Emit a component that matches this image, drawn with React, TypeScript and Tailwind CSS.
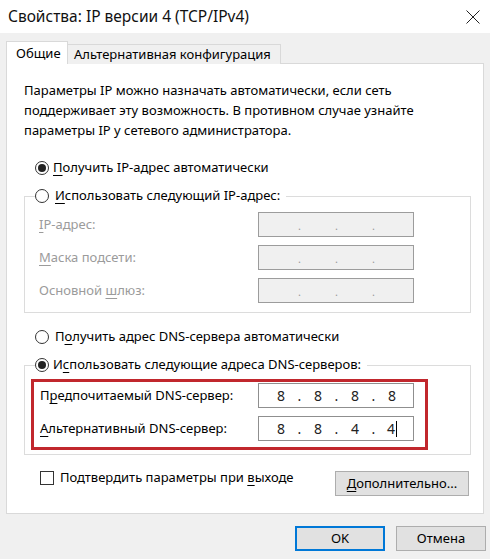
import React from 'react'

const font = { fontFamily: '"Noto Sans", "Open Sans", sans-serif' }

function U({ children }: { children: React.ReactNode }) {
    return <span className="underline underline-offset-[3px] decoration-1">{children}</span>
}

function Radio({ checked }: { checked?: boolean }) {
    return (
        <span className="flex items-center justify-center w-[14px] h-[14px] rounded-full border border-[#333] bg-white shrink-0">
            {checked && <span className="w-[8px] h-[8px] rounded-full bg-[#222]" />}
        </span>
    )
}

function IpBox({ parts, disabled, cursor }: { parts: string[]; disabled?: boolean; cursor?: boolean }) {
    return (
        <div className={`flex items-center h-[25px] w-[156px] pl-[6px] border ${disabled ? 'bg-[#f0f0f0] border-[#9c9c9c]' : 'bg-white border-[#8f8f8f]'}`}>
            {parts.map((p, i) => (
                <React.Fragment key={i}>
                    <span className="w-[32px] text-center text-[14px] text-[#222] flex items-center justify-center">
                        {p}
                        {cursor && i === 3 && <span className="inline-block w-px h-[16px] bg-black ml-px" />}
                    </span>
                    {i < 3 && <span className={`w-[5px] text-center ${disabled ? 'text-[#999] text-[11px] pt-[4px]' : 'text-[#222] text-[14px]'}`}>.</span>}
                </React.Fragment>
            ))}
        </div>
    )
}

export default function App() {
    return (
        <div style={font} className="w-[490px] h-[559px] bg-[#f0f0f0] text-black overflow-hidden">
            <div className="h-[33px] bg-white flex items-center justify-between pl-[8px] pr-[9px]">
                <span className="text-[15.5px] text-[#111]">Свойства: IP версии 4 (TCP/IPv4)</span>
                <svg width="16" height="16" viewBox="0 0 16 16" className="mt-[1px]">
                    <path d="M1.5 1.5 L14.5 14.5 M14.5 1.5 L1.5 14.5" stroke="#222" strokeWidth="1" fill="none" />
                </svg>
            </div>

            <div className="px-[6px]">
                <div className="flex items-end h-[23px] mt-[8px] relative z-10 -mb-px whitespace-nowrap text-[13px]">
                    <div className="h-[23px] w-[62px] bg-white border border-b-0 border-[#d9d9d9] pl-[9px] pt-[2px]">Общие</div>
                    <div className="h-[20px] w-[213px] bg-[#f0f0f0] border border-l-0 border-b-0 border-[#d9d9d9] pl-[6px] leading-[19px]">Альтернативная конфигурация</div>
                </div>

                <div className="h-[451px] bg-white border border-[#d9d9d9] pl-[17px] pr-[12px] text-[13px]">
                    <p className="mt-[16px] leading-[20px] pr-[28px]">
                        Параметры IP можно назначать автоматически, если сеть поддерживает эту возможность. В противном случае узнайте параметры IP у сетевого администратора.
                    </p>

                    <div className="flex items-center gap-[4px] h-[20px] mt-[18px] pl-[11px]">
                        <Radio checked />
                        <span><U>П</U>олучить IP-адрес автоматически</span>
                    </div>

                    <fieldset className="border border-[#dcdcdc] mt-[8px]">
                        <legend className="flex items-center gap-[6px] h-[20px] ml-[10px] pr-[6px]">
                            <Radio />
                            <span><U>И</U>спользовать следующий IP-адрес:</span>
                        </legend>
                        <div className="flex flex-col gap-[8px] mt-[6px] pl-[14px] pb-[9px] text-[#9b9b9b]">
                            <div className="flex items-center">
                                <span className="w-[219px]"><U>I</U>P-адрес:</span>
                                <IpBox parts={['', '', '', '']} disabled />
                            </div>
                            <div className="flex items-center">
                                <span className="w-[219px]"><U>М</U>аска подсети:</span>
                                <IpBox parts={['', '', '', '']} disabled />
                            </div>
                            <div className="flex items-center">
                                <span className="w-[219px]">Основной <U>ш</U>люз:</span>
                                <IpBox parts={['', '', '', '']} disabled />
                            </div>
                        </div>
                    </fieldset>

                    <div className="flex items-center gap-[6px] h-[20px] mt-[14px] pl-[11px]">
                        <Radio />
                        <span>П<U>о</U>лучить адрес DNS-сервера автоматически</span>
                    </div>

                    <fieldset className="border border-[#dcdcdc] mt-[8px]">
                        <legend className="flex items-center gap-[4px] h-[20px] ml-[10px] pr-[6px]">
                            <Radio checked />
                            <span>И<U>с</U>пользовать следующие адреса DNS-серверов:</span>
                        </legend>
                        <div className="pl-[6px] pb-[4px]">
                            <div className="w-[397px] mt-[4px] border-[3px] border-[#c1272d] pl-[6px] pt-[1px] pb-[6px] flex flex-col gap-[8px]">
                                <div className="flex items-center">
                                    <span className="w-[218px]">П<U>р</U>едпочитаемый DNS-сервер:</span>
                                    <IpBox parts={['8', '8', '8', '8']} />
                                </div>
                                <div className="flex items-center">
                                    <span className="w-[218px]"><U>А</U>льтернативный DNS-сервер:</span>
                                    <IpBox parts={['8', '8', '4', '4']} cursor />
                                </div>
                            </div>
                        </div>
                    </fieldset>

                    <div className="flex items-start justify-between mt-[16px] pr-[2px]">
                        <div className="flex items-center gap-[6px] pl-[16px] h-[16px] mt-[-1px]">
                            <span className="w-[14px] h-[14px] border border-[#333] bg-white" />
                            <span>Подтвердить параметры при <U>в</U>ыходе</span>
                        </div>
                        <button className="w-[134px] h-[25px] bg-[#e1e1e1] border border-[#adadad]">
                            <U>Д</U>ополнительно...
                        </button>
                    </div>
                </div>

                <div className="flex justify-end gap-[11px] mt-[12px] -mr-[2px] text-[13px]">
                    <button className="w-[90px] h-[25px] bg-[#e1e1e1] border-2 border-[#0078d7]">OK</button>
                    <button className="w-[90px] h-[25px] bg-[#e1e1e1] border border-[#adadad]">Отмена</button>
                </div>
            </div>
        </div>
    )
}
